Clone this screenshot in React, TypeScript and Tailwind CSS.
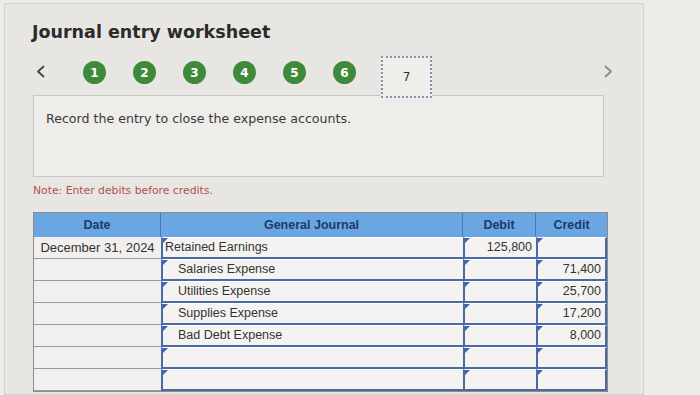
import React from "react";

const rows = [
  { date: "December 31, 2024", account: "Retained Earnings", indent: false, debit: "125,800", credit: "" },
  { date: "", account: "Salaries Expense", indent: true, debit: "", credit: "71,400" },
  { date: "", account: "Utilities Expense", indent: true, debit: "", credit: "25,700" },
  { date: "", account: "Supplies Expense", indent: true, debit: "", credit: "17,200" },
  { date: "", account: "Bad Debt Expense", indent: true, debit: "", credit: "8,000" },
  { date: "", account: "", indent: false, debit: "", credit: "" },
  { date: "", account: "", indent: false, debit: "", credit: "" },
];

const InputCell = ({ children, className = "" }: { children?: React.ReactNode; className?: string }) => (
  <div
    className={`relative flex h-[22px] items-center border-b-2 border-l-2 border-t border-[#4a6aa6] border-t-white bg-[#f4f3f1] px-1 text-[12.5px] text-[#333] ${className}`}
  >
    <span className="absolute left-0 top-0 h-0 w-0 border-r-[5px] border-t-[5px] border-r-transparent border-t-[#3a64b0]" />
    {children}
  </div>
);

const Chevron = ({ dir, color }: { dir: "left" | "right"; color: string }) => (
  <svg width="9" height="13" viewBox="0 0 9 13" fill="none" className="mt-[9px]">
    <path
      d={dir === "left" ? "M7.5 1.5 L2 6.5 L7.5 11.5" : "M1.5 1.5 L7 6.5 L1.5 11.5"}
      stroke={color}
      strokeWidth="1.8"
      strokeLinecap="round"
      strokeLinejoin="round"
    />
  </svg>
);

export default function App() {
  return (
    <div className="h-[395px] w-[700px] bg-[#eeece8] pl-[4px] pt-[3px]" style={{ fontFamily: '"DejaVu Sans", Verdana, sans-serif' }}>
      <div className="h-[392px] w-[640px] border border-[#d3d0cb] bg-[#e8e6e2]">
        <h1 className="ml-[27px] mt-[17px] text-[17.5px] font-bold leading-[22px] text-[#2b2b2b]">Journal entry worksheet</h1>

        <div className="mt-[13px] flex h-[42px] items-start">
          <div className="ml-[31px]">
            <Chevron dir="left" color="#444" />
          </div>
          <div className="ml-[38px] mt-[5px] flex gap-[27px]">
            {[1, 2, 3, 4, 5, 6].map(n => (
              <div key={n} className="flex h-[23px] w-[23px] items-center justify-center rounded-full bg-[#3f8a3a] text-[12px] font-bold text-white">
                {n}
              </div>
            ))}
          </div>
          <div className="ml-[25px] flex h-[42px] w-[51px] items-center justify-center border-2 border-dotted border-[#8a8fa8] bg-[#efeeeb] text-[12px] text-[#333]">
            7
          </div>
          <div className="ml-[172px]">
            <Chevron dir="right" color="#8a8a8a" />
          </div>
        </div>

        <div className="ml-[28px] mt-[-3px] h-[82px] w-[571px] border border-[#c9c6c1] bg-[#eeede9] pl-[12px] pt-[14px] text-[12.6px] text-[#3a3a3a]">
          Record the entry to close the expense accounts.
        </div>

        <p className="ml-[28px] mt-[6px] text-[10.8px] leading-[16px] text-[#b5504f]">Note: Enter debits before credits.</p>

        <div className="ml-[28px] mt-[13px] w-[575px] border border-[#8c8c8c]" style={{ fontFamily: '"Liberation Sans", Arial, sans-serif' }}>
          <div className="grid h-[24px] grid-cols-[127px_302px_73px_71px] bg-[#6aa6e2] text-[12.5px] font-bold text-[#1b3a6e]">
            <div className="flex items-center justify-center border-r border-[#4a78b8]">Date</div>
            <div className="flex items-center justify-center border-r border-[#4a78b8]">General Journal</div>
            <div className="flex items-center justify-center border-r border-[#4a78b8]">Debit</div>
            <div className="flex items-center justify-center">Credit</div>
          </div>
          {rows.map((r, i) => (
            <div key={i} className="grid grid-cols-[127px_302px_73px_71px]">
              <div className="flex h-[22px] items-center justify-center border-b border-[#9a9a9a] bg-[#f1f0ee] text-[13px] text-[#333]">
                {r.date}
              </div>
              <InputCell className={r.indent ? "pl-[15px]" : "pl-[2px]"}>{r.account}</InputCell>
              <InputCell className="justify-end">{r.debit}</InputCell>
              <InputCell className="justify-end border-r-2">{r.credit}</InputCell>
            </div>
          ))}
        </div>
      </div>
    </div>
  );
}
